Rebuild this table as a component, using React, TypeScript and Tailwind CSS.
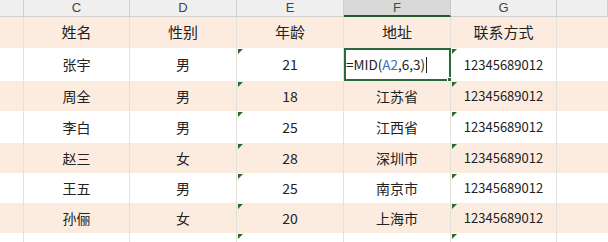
const cols = ['', 'C', 'D', 'E', 'F', 'G', '']

const titles = ['姓名', '性别', '年龄', '地址', '联系方式']

const rows = [
  { name: '张宇', sex: '男', age: '21', addr: '', phone: '12345689012', h: 'h-[33px]' },
  { name: '周全', sex: '男', age: '18', addr: '江苏省', phone: '12345689012', h: 'h-[30px]' },
  { name: '李白', sex: '男', age: '25', addr: '江西省', phone: '12345689012', h: 'h-[32px]' },
  { name: '赵三', sex: '女', age: '28', addr: '深圳市', phone: '12345689012', h: 'h-[30px]' },
  { name: '王五', sex: '男', age: '25', addr: '南京市', phone: '12345689012', h: 'h-[30px]' },
  { name: '孙俪', sex: '女', age: '20', addr: '上海市', phone: '12345689012', h: 'h-[30px]' },
  { name: '', sex: '', age: '', addr: '', phone: '', h: 'h-[30px]' },
]

const grid = 'grid grid-cols-[24px_106px_107px_107px_107px_106px_1fr]'

function Flag() {
  return (
    <span className="absolute left-[1px] top-[1px] h-0 w-0 border-t-[5px] border-r-[5px] border-t-[#2b6a2b] border-r-transparent" />
  )
}

function Cell({ children, flag = false }: { children?: React.ReactNode; flag?: boolean }) {
  return (
    <div className="relative flex items-center justify-center border-r border-[#e4e1dd]">
      {flag && <Flag />}
      {children}
    </div>
  )
}

export default function App() {
  return (
    <div className="h-[242px] w-[608px] overflow-hidden bg-white text-[#222] font-['Noto_Sans_CJK_SC','Noto_Sans',sans-serif]">
      {/* column letters */}
      <div className={`${grid} h-[17px] bg-[#efefef] font-['Liberation_Sans',sans-serif] text-[13px] leading-[14px]`}>
        {cols.map((c, i) =>
          c === 'F' ? (
            <div
              key={i}
              className="flex items-center justify-center border-r border-b-2 border-r-[#c9c9c9] border-b-[#1f5c32] bg-[#d9d9d9] text-[#1f5c32]"
            >
              {c}
            </div>
          ) : (
            <div key={i} className="flex items-center justify-center border-r border-b border-[#cfcfcf] text-[#444]">
              {c}
            </div>
          )
        )}
      </div>

      {/* title row */}
      <div className={`${grid} h-[31px] bg-[#fcece0] text-[15px]`}>
        <Cell />
        {titles.map((t) => (
          <Cell key={t}>{t}</Cell>
        ))}
        <div />
      </div>

      {rows.map((r, i) => (
        <div key={i} className={`${grid} ${r.h} text-[14px] ${i % 2 === 0 ? 'bg-white' : 'bg-[#fcece0]'}`}>
          <Cell />
          <Cell>{r.name}</Cell>
          <Cell>{r.sex}</Cell>
          <Cell flag>{r.age}</Cell>
          {i === 0 ? (
            <div className="relative flex items-center border-2 border-[#2a6a3a] text-[13.5px]">
              <span>
                =MID(<span className="text-[#3b6fc0]">A2</span>,6,3)
              </span>
              <span className="ml-[1px] h-[16px] w-px bg-[#222]" />
              <span className="absolute -bottom-[3px] -right-[3px] h-[5px] w-[5px] border border-white bg-[#2a6a3a]" />
            </div>
          ) : (
            <Cell>{r.addr}</Cell>
          )}
          <Cell flag>
            <span className="text-[13px]">{r.phone}</span>
          </Cell>
          <div />
        </div>
      ))}
    </div>
  )
}
